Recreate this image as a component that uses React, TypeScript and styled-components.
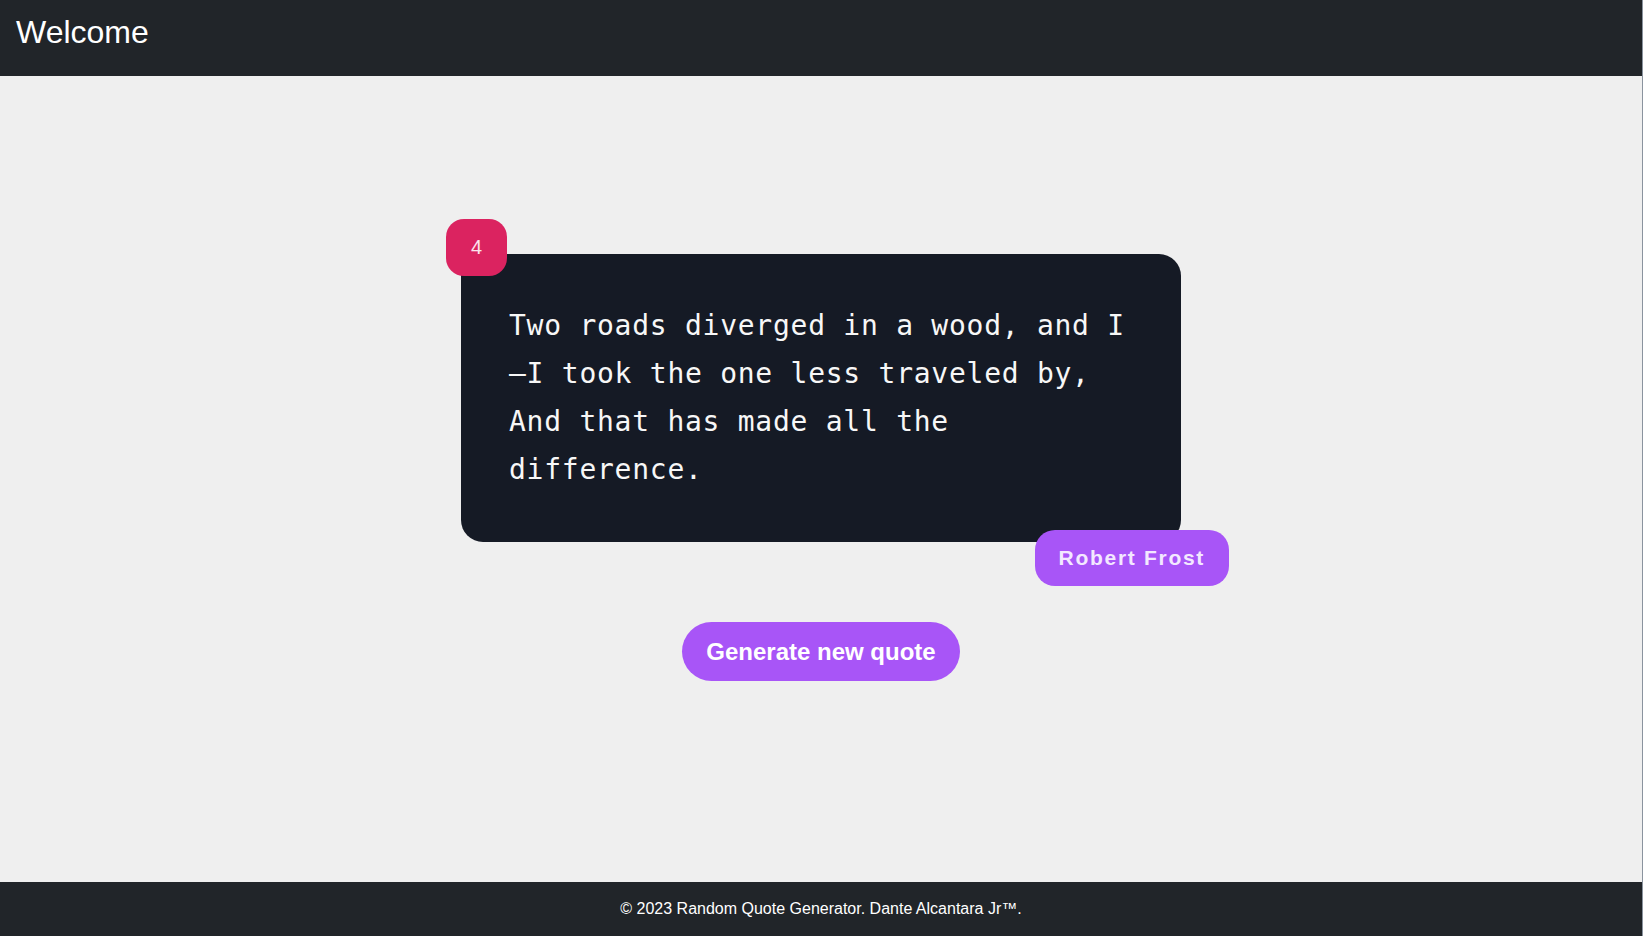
import React from "react";
import styled, { createGlobalStyle } from "styled-components";

const GlobalStyle = createGlobalStyle`
  html, body {
    margin: 0;
    padding: 0;
    background: #efefef;
  }
  * { box-sizing: border-box; }
`;

const Page = styled.div`
  display: flex;
  flex-direction: column;
  height: 936px;
  overflow: hidden;
  background: #efefef;
  border-right: 1px solid #8a939e;
  font-family: "Liberation Sans", Arial, sans-serif;
`;

const Header = styled.header`
  height: 76px;
  flex-shrink: 0;
  background: #212529;
  padding: 14px 16px 0;
`;

const Title = styled.h1`
  margin: 0;
  font-size: 32px;
  font-weight: 400;
  color: #ffffff;
  line-height: normal;
`;

const Main = styled.main`
  flex: 1;
  display: flex;
  flex-direction: column;
  align-items: center;
  padding-top: 178px;
`;

const Card = styled.div`
  position: relative;
  width: 720px;
  padding: 48px;
  background: #151a25;
  border-radius: 22px;
`;

const QuoteText = styled.p`
  margin: 0;
  font-family: "DejaVu Sans Mono", "Liberation Mono", monospace;
  font-size: 28px;
  letter-spacing: 0.74px;
  line-height: 48px;
  color: #f7f7f7;
`;

const Badge = styled.span`
  position: absolute;
  left: -15px;
  top: -35px;
  width: 61px;
  height: 57px;
  display: flex;
  align-items: center;
  justify-content: center;
  background: #db2360;
  color: #fbe4ec;
  border-radius: 18px;
  font-family: "Liberation Sans", Arial, sans-serif;
  font-size: 20px;
`;

const Author = styled.span`
  position: absolute;
  right: -48px;
  bottom: -44px;
  height: 56px;
  display: flex;
  align-items: center;
  padding: 0 24px;
  background: #a855f7;
  color: #f3e8ff;
  border-radius: 20px;
  font-family: "Liberation Sans", Arial, sans-serif;
  font-size: 21px;
  font-weight: 700;
  letter-spacing: 1.7px;
`;

const GenerateButton = styled.button`
  margin-top: 80px;
  padding: 16px 24px;
  height: 59px;
  border: none;
  border-radius: 30px;
  background: #a855f7;
  color: #ffffff;
  font-family: "Liberation Sans", Arial, sans-serif;
  font-size: 24px;
  font-weight: 700;
  cursor: pointer;
`;

const Footer = styled.footer`
  height: 54px;
  flex-shrink: 0;
  background: #212529;
  display: flex;
  align-items: center;
  justify-content: center;
  color: #ffffff;
  font-size: 16px;
`;

export default function App() {
  return (
    <>
      <GlobalStyle />
      <Page>
        <Header>
          <Title>Welcome</Title>
        </Header>
        <Main>
          <Card>
            <Badge>4</Badge>
            <QuoteText>
              Two roads diverged in a wood, and I—I took the one less traveled by, And that has made all the difference.
            </QuoteText>
            <Author>Robert Frost</Author>
          </Card>
          <GenerateButton>Generate new quote</GenerateButton>
        </Main>
        <Footer>© 2023 Random Quote Generator. Dante Alcantara Jr™.</Footer>
      </Page>
    </>
  );
}
